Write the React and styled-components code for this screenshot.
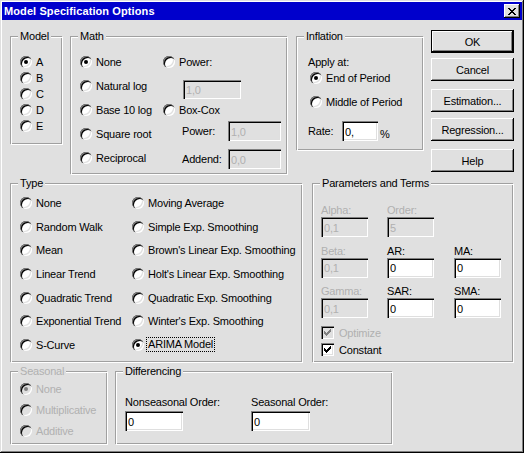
import React from "react";
import styled, { createGlobalStyle } from "styled-components";

const FACE = "#e0e0e0";
const DIM = "#b0b0b0";

const GlobalStyle = createGlobalStyle`
  html, body { margin: 0; padding: 0; background: ${FACE}; }
  body {
    font-family: "Liberation Sans", Arial, sans-serif;
    font-size: 11px;
    letter-spacing: -0.2px;
    color: #000;
  }
  * { box-sizing: border-box; }
`;

const Window = styled.div`
  width: 524px;
  height: 453px;
  padding: 2px;
  background: ${FACE};
  box-shadow: inset -1px -1px 0 #000, inset 1px 1px 0 #dfdfdf,
    inset -2px -2px 0 #808080, inset 2px 2px 0 #fff;
`;

const TitleBar = styled.div`
  height: 18px;
  display: flex;
  align-items: center;
  justify-content: space-between;
  padding: 0 2px 0 2px;
  background: #0000cc;
  color: #fff;
  font-weight: bold;
  letter-spacing: 0.1px;
`;

const CloseBox = styled.span`
  width: 16px;
  height: 14px;
  display: flex;
  align-items: center;
  justify-content: center;
  background: ${FACE};
  box-shadow: inset -1px -1px 0 #000, inset 1px 1px 0 #fff,
    inset -2px -2px 0 #808080;
`;

const Body = styled.div`
  display: flex;
  flex-direction: column;
  gap: 8px;
  padding: 10px 0 0 8px;
`;

const Row = styled.div`
  display: flex;
  align-items: flex-start;
`;

const Group = styled.div`
  position: relative;
  flex: none;
  width: ${(p) => p.$w}px;
  height: ${(p) => p.$h}px;
  margin-top: ${(p) => p.$mt || 0}px;
  margin-left: ${(p) => p.$ml || 0}px;
  padding: ${(p) => p.$pad};
  &::before,
  &::after {
    content: "";
    position: absolute;
    pointer-events: none;
  }
  &::before {
    left: 0;
    top: 0;
    right: 1px;
    bottom: 1px;
    border: 1px solid #a0a0a0;
  }
  &::after {
    left: 1px;
    top: 1px;
    right: 0;
    bottom: 0;
    border: 1px solid #fff;
  }
`;

const Legend = styled.span`
  position: absolute;
  z-index: 1;
  top: -6px;
  left: 8px;
  padding: 0 2px;
  line-height: 13px;
  background: ${FACE};
  color: ${(p) => (p.$dim ? DIM : "#000")};
`;

const Stack = styled.div`
  display: flex;
  flex-direction: column;
  align-items: flex-start;
  gap: ${(p) => p.$gap || 0}px;
  width: ${(p) => (p.$w ? `${p.$w}px` : "auto")};
  flex: none;
`;

const Option = styled.div`
  display: flex;
  align-items: center;
  gap: 4px;
  height: 16px;
  white-space: nowrap;
  margin-top: ${(p) => p.$mt || 0}px;
  margin-left: ${(p) => p.$ml || 0}px;
  color: ${(p) => (p.$dim ? DIM : "#000")};
`;

const RadioMark = styled.span`
  position: relative;
  flex: none;
  width: 12px;
  height: 12px;
  border-radius: 50%;
  background: ${(p) => (p.$dim ? FACE : "#fff")};
  box-shadow: inset 1px 1px 0 #808080, inset 2px 2px 0 #000,
    inset -1px -1px 0 #fff, inset -2px -2px 0 #dfdfdf;
  &::after {
    content: "";
    display: ${(p) => (p.$on ? "block" : "none")};
    position: absolute;
    left: 4px;
    top: 4px;
    width: 4px;
    height: 4px;
    border-radius: 50%;
    background: ${(p) => (p.$dim ? "#808080" : "#000")};
  }
`;

const CheckMark = styled.span`
  flex: none;
  width: 13px;
  height: 13px;
  display: block;
  background: ${(p) => (p.$dim ? FACE : "#fff")};
  box-shadow: inset 1px 1px 0 #808080, inset 2px 2px 0 #000,
    inset -1px -1px 0 #fff, inset -2px -2px 0 #dfdfdf;
`;

const CheckRow = styled.div`
  display: flex;
  align-items: center;
  gap: 5px;
  height: 13px;
  margin-top: ${(p) => p.$mt || 0}px;
  color: ${(p) => (p.$dim ? DIM : "#000")};
`;

const Field = styled.input`
  display: block;
  flex: none;
  width: ${(p) => p.$w}px;
  height: ${(p) => p.$h || 20}px;
  margin: ${(p) => p.$mt || 0}px 0 0 ${(p) => p.$ml || 0}px;
  padding: 1px 0 0 3px;
  border: none;
  outline: none;
  font: inherit;
  letter-spacing: inherit;
  color: #000;
  background: #fff;
  box-shadow: inset 1px 1px 0 #808080, inset 2px 2px 0 #000,
    inset -1px -1px 0 #fff, inset -2px -2px 0 #dfdfdf;
  &:disabled {
    color: ${DIM};
    background: ${FACE};
  }
`;

const FieldRow = styled.div`
  display: flex;
  align-items: center;
  margin-top: ${(p) => p.$mt || 0}px;
  margin-left: ${(p) => p.$ml || 0}px;
`;

const FieldLabel = styled.span`
  width: ${(p) => p.$w}px;
  flex: none;
`;

const Caption = styled.div`
  height: ${(p) => p.$h || 16}px;
  line-height: ${(p) => p.$h || 16}px;
  white-space: nowrap;
  color: ${(p) => (p.$dim ? DIM : "#000")};
`;

const Percent = styled.span`
  align-self: flex-end;
  margin: 0 0 1px 2px;
`;

const ButtonCol = styled.div`
  display: flex;
  flex-direction: column;
  margin-left: 7px;
`;

const Button = styled.button`
  width: 83px;
  height: 23px;
  margin-top: ${(p) => p.$mt || 0}px;
  padding: 0;
  font: inherit;
  letter-spacing: inherit;
  color: #000;
  background: ${FACE};
  border: ${(p) => (p.$default ? "1px solid #000" : "none")};
  box-shadow: inset -1px -1px 0 #000, inset 1px 1px 0 #fff,
    inset -2px -2px 0 #808080, inset 2px 2px 0 #dfdfdf;
`;

const TypeGrid = styled.div`
  display: grid;
  grid-auto-flow: column;
  grid-template-columns: 112px auto;
  grid-template-rows: repeat(7, 16px);
  row-gap: 7.67px;
`;

const Focus = styled.span`
  border: 1px dotted #000;
  padding: 0 1px;
  margin-left: -2px;
  line-height: 13px;
`;

const ParamGrid = styled.div`
  display: grid;
  grid-template-columns: 66px 67px 47px;
  row-gap: 6.5px;
`;

const DiffGrid = styled.div`
  display: grid;
  grid-template-columns: 126px 60px;
`;

const Radio = ({ on, dim, children, ...rest }) => (
  <Option $dim={dim} {...rest}>
    <RadioMark $on={on} $dim={dim} />
    {children}
  </Option>
);

const TICK =
  "M6 0h1v1h-1z M5 1h2v1h-2z M0 2h1v1h-1z M4 2h3v1h-3z M0 3h2v1h-2z M3 3h3v1h-3z M0 4h5v1h-5z M1 5h3v1h-3z M2 6h1v1h-1z";

const Check = ({ on, dim, children, ...rest }) => (
  <CheckRow $dim={dim} {...rest}>
    <CheckMark $dim={dim}>
      {on && (
        <svg width="13" height="13" shapeRendering="crispEdges">
          <path d={TICK} transform="translate(3 3)" fill={dim ? "#808080" : "#000"} />
        </svg>
      )}
    </CheckMark>
    {children}
  </CheckRow>
);

const Param = ({ label, value, dim }) => (
  <Stack>
    <Caption $h={14} $dim={dim}>
      {label}
    </Caption>
    <Field $w={47} value={value} disabled={dim} readOnly />
  </Stack>
);

const typeLeft = ["None", "Random Walk", "Mean", "Linear Trend", "Quadratic Trend", "Exponential Trend", "S-Curve"];
const typeRight = [
  "Moving Average",
  "Simple Exp. Smoothing",
  "Brown's Linear Exp. Smoothing",
  "Holt's Linear Exp. Smoothing",
  "Quadratic Exp. Smoothing",
  "Winter's Exp. Smoothing",
];

export default function App() {
  return (
    <>
      <GlobalStyle />
      <Window>
        <TitleBar>
          <span>Model Specification Options</span>
          <CloseBox>
            <svg width="8" height="7" shapeRendering="crispEdges">
              <path
                d="M0 0h2v1h-2z M6 0h2v1h-2z M1 1h2v1h-2z M5 1h2v1h-2z M2 2h4v1h-4z M3 3h2v1h-2z M2 4h4v1h-4z M1 5h2v1h-2z M5 5h2v1h-2z M0 6h2v1h-2z M6 6h2v1h-2z"
                fill="#000"
              />
            </svg>
          </CloseBox>
        </TitleBar>

        <Body>
          <Row>
            <Group $w={53} $h={109} $mt={6} $pad="18px 0 0 10px">
              <Legend>Model</Legend>
              <Stack>
                <Radio on>A</Radio>
                <Radio>B</Radio>
                <Radio>C</Radio>
                <Radio>D</Radio>
                <Radio>E</Radio>
              </Stack>
            </Group>

            <Group $w={218} $h={139} $mt={6} $ml={7} $pad="18px 0 0 10px">
              <Legend>Math</Legend>
              <Row>
                <Stack $gap={8} $w={83}>
                  <Radio on>None</Radio>
                  <Radio>Natural log</Radio>
                  <Radio>Base 10 log</Radio>
                  <Radio>Square root</Radio>
                  <Radio>Reciprocal</Radio>
                </Stack>
                <Stack>
                  <Radio>Power:</Radio>
                  <Field $w={58} $h={19} $mt={10} $ml={20} value="1,0" disabled readOnly />
                  <Radio $mt={3}>Box-Cox</Radio>
                  <FieldRow $mt={3} $ml={19}>
                    <FieldLabel $w={46}>Power:</FieldLabel>
                    <Field $w={53} value="1,0" disabled readOnly />
                  </FieldRow>
                  <FieldRow $mt={8} $ml={19}>
                    <FieldLabel $w={46}>Addend:</FieldLabel>
                    <Field $w={53} value="0,0" disabled readOnly />
                  </FieldRow>
                </Stack>
              </Row>
            </Group>

            <Group $w={128} $h={115} $mt={6} $ml={8} $pad="18px 0 0 12px">
              <Legend>Inflation</Legend>
              <Caption>Apply at:</Caption>
              <Radio on $ml={2}>
                End of Period
              </Radio>
              <Radio $ml={2} $mt={8}>
                Middle of Period
              </Radio>
              <FieldRow $mt={11}>
                <FieldLabel $w={34}>Rate:</FieldLabel>
                <Field $w={36} value="0," readOnly />
                <Percent>%</Percent>
              </FieldRow>
            </Group>

            <ButtonCol>
              <Button $default>OK</Button>
              <Button $mt={5}>Cancel</Button>
              <Button $mt={8}>Estimation...</Button>
              <Button $mt={6}>Regression...</Button>
              <Button $mt={8}>Help</Button>
            </ButtonCol>
          </Row>

          <Row>
            <Group $w={293} $h={180} $pad="12px 0 0 10px">
              <Legend>Type</Legend>
              <TypeGrid>
                {typeLeft.map((t) => (
                  <Radio key={t}>{t}</Radio>
                ))}
                {typeRight.map((t) => (
                  <Radio key={t}>{t}</Radio>
                ))}
                <Radio on>
                  <Focus>ARIMA Model</Focus>
                </Radio>
              </TypeGrid>
            </Group>

            <Group $w={202} $h={180} $ml={9} $pad="20px 0 0 9px">
              <Legend>Parameters and Terms</Legend>
              <ParamGrid>
                <Param label="Alpha:" value="0,1" dim />
                <Param label="Order:" value="5" dim />
                <span />
                <Param label="Beta:" value="0,1" dim />
                <Param label="AR:" value="0" />
                <Param label="MA:" value="0" />
                <Param label="Gamma:" value="0,1" dim />
                <Param label="SAR:" value="0" />
                <Param label="SMA:" value="0" />
              </ParamGrid>
              <Check on dim $mt={8}>
                Optimize
              </Check>
              <Check on $mt={4}>
                Constant
              </Check>
            </Group>
          </Row>

          <Row>
            <Group $w={98} $h={74} $pad="10px 0 0 10px">
              <Legend $dim>Seasonal</Legend>
              <Stack $gap={5}>
                <Radio on dim>
                  None
                </Radio>
                <Radio dim>Multiplicative</Radio>
                <Radio dim>Additive</Radio>
              </Stack>
            </Group>

            <Group $w={278} $h={74} $ml={7} $pad="24px 0 0 10px">
              <Legend>Differencing</Legend>
              <DiffGrid>
                <Stack $gap={2}>
                  <Caption $h={14}>Nonseasonal Order:</Caption>
                  <Field $w={58} value="0" readOnly />
                </Stack>
                <Stack $gap={2}>
                  <Caption $h={14}>Seasonal Order:</Caption>
                  <Field $w={59} value="0" readOnly />
                </Stack>
              </DiffGrid>
            </Group>
          </Row>
        </Body>
      </Window>
    </>
  );
}
